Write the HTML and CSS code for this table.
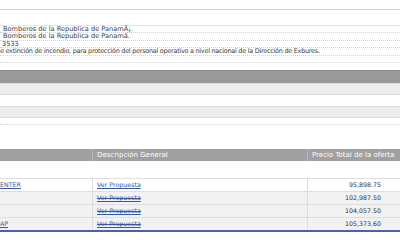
FILE: index.html
```html
<!DOCTYPE html>
<html>
<head>
<meta charset="utf-8">
<link rel="stylesheet" href="styles.css">
</head>
<body>
<div class="page">
  <div class="topbar"></div>
  <div class="info">
    <div class="info-row indent">Bomberos de la Republica de PanamÃ¡.</div>
    <div class="info-row indent">Bomberos de la Republica de Panamá.</div>
    <div class="info-row indent-sm">3533</div>
    <div class="info-row long">e extinción de incendio, para protección del personal operativo a nivel nacional de la Dirección de Exbures.</div>
    <div class="info-row"></div>
  </div>
  <div class="section-head"></div>
  <div class="band"></div>
  <div class="blank"></div>
  <div class="band"></div>
  <div class="dotted"></div>

  <div class="table">
    <div class="thead">
      <div class="cell"></div>
      <div class="cell">Descripción General</div>
      <div class="cell">Precio Total de la oferta</div>
    </div>
    <div class="empty-row"></div>
    <div class="trow">
      <div class="cell name"><a href="#">ENTER</a></div>
      <div class="cell"><a href="#">Ver Propuesta</a></div>
      <div class="cell num">95,898.75</div>
    </div>
    <div class="trow alt">
      <div class="cell name"></div>
      <div class="cell"><a href="#" class="struck">Ver Propuesta</a></div>
      <div class="cell num">102,987.50</div>
    </div>
    <div class="trow alt">
      <div class="cell name"></div>
      <div class="cell"><a href="#" class="struck">Ver Propuesta</a></div>
      <div class="cell num">104,057.50</div>
    </div>
    <div class="trow alt last">
      <div class="cell name"><a href="#">AP</a></div>
      <div class="cell"><a href="#" class="struck">Ver Propuesta</a></div>
      <div class="cell num">105,373.60</div>
    </div>
  </div>
</div>
</body>
</html>
```
FILE: styles.css
```css
html, body {
  margin: 0;
  padding: 0;
  background: #fff;
}
body {
  font-family: "DejaVu Sans", Verdana, sans-serif;
  color: #444;
  width: 400px;
  height: 240px;
  overflow: hidden;
}
.page {
  display: flex;
  flex-direction: column;
}
.topbar {
  height: 15px;
  margin-top: 9px;
  border-top: 1px solid #d4d4d4;
  border-bottom: 1px solid #e4e4e4;
}
.info {
  display: flex;
  flex-direction: column;
}
.info-row {
  height: 6.4px;
  line-height: 6.6px;
  font-size: 6.6px;
  white-space: nowrap;
  color: #3c3c3c;
  border-bottom: 1px dotted #c9d6e6;
}
.info-row.indent {
  padding-left: 3px;
}
.info-row.indent-sm {
  padding-left: 2px;
}
.info-row.long {
  font-size: 6.5px;
  letter-spacing: -0.28px;
}
.section-head {
  margin-top: 7px;
  height: 12px;
  background: #9a9a9a;
  border-top: 1px solid #8a8a8a;
}
.band {
  height: 10px;
  background: #ededed;
  border-top: 1px solid #dcdcdc;
  border-bottom: 1px solid #dcdcdc;
}
.blank {
  height: 11px;
}
.dotted {
  margin-top: 6px;
  border-top: 1px dotted #c9d6e6;
}
.table {
  margin-top: 24px;
  display: flex;
  flex-direction: column;
}
.thead, .trow {
  display: grid;
  grid-template-columns: 92px 215px 93px;
}
.thead {
  height: 12px;
  background: #a0a0a0;
  color: #fff;
  font-size: 7px;
  line-height: 12px;
}
.thead .cell {
  padding-left: 4px;
  border-left: 1px solid #b8b8b8;
  white-space: nowrap;
  overflow: hidden;
}
.thead .cell:first-child {
  border-left: none;
}
.empty-row {
  height: 17px;
  border-bottom: 1px solid #dedede;
}
.trow {
  height: 12px;
  border-bottom: 1px solid #dedede;
  font-size: 6.3px;
  line-height: 12px;
  background: #fff;
}
.trow.alt {
  background: #f2f2f2;
}
.trow.last {
  border-bottom: 2px solid #4b63a6;
}
.trow .cell {
  border-left: 1px solid #dcdcdc;
  padding-left: 4px;
  white-space: nowrap;
}
.trow .cell.name {
  border-left: none;
  padding-left: 0;
}
.trow .cell.num {
  text-align: right;
  padding-right: 19px;
  color: #333;
}
a {
  color: #3a56a0;
  text-decoration: underline;
}
a.struck {
  text-decoration: underline line-through;
}
```
